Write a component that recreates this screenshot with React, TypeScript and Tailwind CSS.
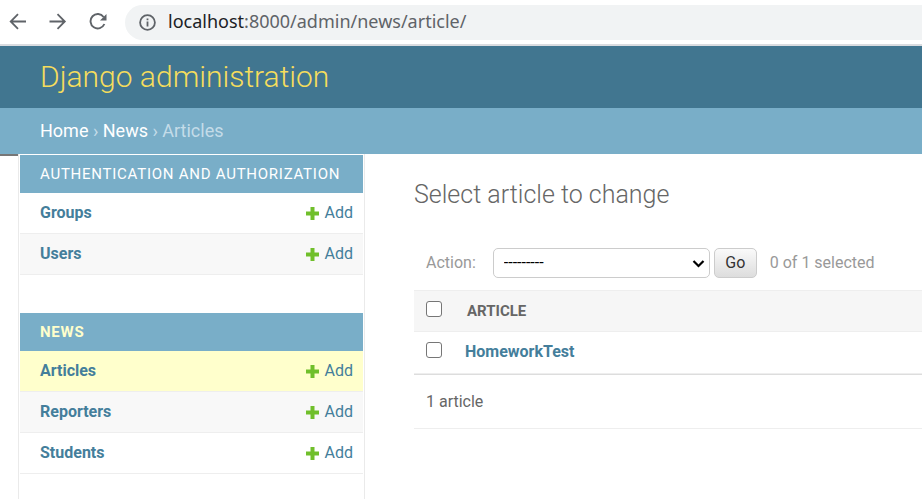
type Section = { title: string; current?: boolean; models: string[] };

const sections: Section[] = [
  { title: "Authentication and Authorization", models: ["Groups", "Users"] },
  { title: "News", current: true, models: ["Articles", "Reporters", "Students"] },
];

const rowTint = (model: string, index: number) =>
  model === "Articles" ? "bg-[#ffffcc]" : index % 2 === 1 ? "bg-[#f8f8f8]" : "bg-white";

function BrowserBar() {
  return (
    <div className="flex h-[46px] items-center border-b-2 border-[#dadce0] bg-white pl-2 font-['Noto_Sans','Open_Sans',sans-serif] text-[#5f6368]">
      <button type="button" aria-label="Back" className="flex w-5 justify-center">
        <svg width="18" height="18" viewBox="0 0 18 18" fill="none" stroke="currentColor" strokeWidth="1.8">
          <path d="M17 8.5H2M9 1.2 1.7 8.5 9 15.8" />
        </svg>
      </button>
      <button type="button" aria-label="Forward" className="ml-5 flex w-5 justify-center">
        <svg width="18" height="18" viewBox="0 0 18 18" fill="none" stroke="currentColor" strokeWidth="1.8">
          <path d="M.5 8.5H15M8.5 1.2l7.3 7.3-7.3 7.3" />
        </svg>
      </button>
      <button type="button" aria-label="Reload" className="ml-5 flex w-5 justify-center">
        <svg width="18" height="18" viewBox="0 0 18 18" fill="none" stroke="currentColor" strokeWidth="1.9">
          <path d="M14.6 4A7.2 7.2 0 1 0 15.4 11" />
          <path d="M17.5 1v6.5H11z" fill="currentColor" stroke="none" />
        </svg>
      </button>
      <div className="ml-[17px] flex h-[35px] flex-1 items-center rounded-l-full bg-[#f1f3f4] pl-3.5">
        <svg width="17" height="17" viewBox="0 0 17 17" fill="none" stroke="currentColor" strokeWidth="1.8">
          <circle cx="8.5" cy="8.5" r="7.4" />
          <path d="M8.5 7.6v4.9M8.5 4.4v1.8" />
        </svg>
        <span className="ml-3 pb-0.5 text-[18px] leading-6">
          <span className="text-[#202124]">localhost</span>:8000/admin/news/article/
        </span>
      </div>
    </div>
  );
}

function Sidebar() {
  return (
    <nav className="w-[347px] shrink-0 border-x border-[#eaeaea] px-px pt-px">
      {sections.map((section) => (
        <table key={section.title} className="mb-[38px] w-full border-separate border-spacing-0">
          <caption
            className={`h-[38px] bg-[#79aec8] px-5 text-left text-[15px] leading-[38px] tracking-wider uppercase ${
              section.current ? "font-bold text-[#ffffcc]" : "text-white"
            }`}
          >
            <a href="#">{section.title}</a>
          </caption>
          <tbody>
            {section.models.map((model, i) => (
              <tr key={model} className={`h-[41px] ${rowTint(model, i)}`}>
                <th
                  scope="row"
                  className="border-b border-[#eeeeee] p-0 pl-5 text-left font-bold text-[#447e9b]"
                >
                  <a href="#">{model}</a>
                </th>
                <td className="border-b border-[#eeeeee] p-0 pr-2.5 text-[#447e9b]">
                  <a href="#" className="flex items-center justify-end gap-1.5">
                    <svg width="13" height="13" viewBox="0 0 13 13" fill="#70bf2b">
                      <path d="M4.5 0h4v4.5H13v4H8.5V13h-4V8.5H0v-4h4.5z" />
                    </svg>
                    Add
                  </a>
                </td>
              </tr>
            ))}
          </tbody>
        </table>
      ))}
    </nav>
  );
}

function ChangeList() {
  return (
    <main className="min-w-0 flex-1 pt-[25px] pl-[49px]">
      <h1 className="text-[25px] leading-8 font-light text-[#666666]">Select article to change</h1>
      <div className="mt-[37px] flex h-[30px] items-center pl-3 text-[#999999]">
        <label htmlFor="action">Action:</label>
        <div className="relative ml-[17px]">
          <select
            id="action"
            className="block h-[30px] w-[217px] appearance-none rounded-[5px] border border-[#cccccc] bg-white pl-2.5 text-black"
          >
            <option>---------</option>
          </select>
          <svg
            className="pointer-events-none absolute top-3 right-[5px]"
            width="13"
            height="8"
            viewBox="0 0 13 8"
            fill="none"
            stroke="#000000"
            strokeWidth="2.2"
          >
            <path d="m1.5 1 5 5 5-5" />
          </svg>
        </div>
        <button
          type="button"
          className="ml-1 h-[30px] w-[43px] rounded-[5px] border border-[#cccccc] bg-linear-to-b from-[#fafafa] to-[#dddddd] text-[#333333]"
        >
          Go
        </button>
        <span className="ml-[13px]">0 of 1 selected</span>
      </div>
      <table className="mt-3 w-full border-separate border-spacing-0">
        <thead>
          <tr className="h-[42px] bg-[#f6f6f6]">
            <th className="w-[51px] border-y border-[#eeeeee] p-0 pb-1 pl-3 text-left">
              <input
                type="checkbox"
                aria-label="Select all"
                className="block size-4 appearance-none rounded-[3px] border border-[#767676] bg-white"
              />
            </th>
            <th className="border-y border-[#eeeeee] p-0 pl-0.5 text-left text-[15px] font-bold text-[#666666] uppercase">
              Article
            </th>
          </tr>
        </thead>
        <tbody>
          <tr className="h-[42px]">
            <td className="border-b border-[#eeeeee] p-0 pb-1.5 pl-3">
              <input
                type="checkbox"
                aria-label="HomeworkTest"
                className="block size-4 appearance-none rounded-[3px] border border-[#767676] bg-white"
              />
            </td>
            <th scope="row" className="border-b border-[#eeeeee] p-0 pb-0.5 text-left font-bold text-[#447e9b]">
              <a href="#">HomeworkTest</a>
            </th>
          </tr>
        </tbody>
      </table>
      <p className="h-[55px] border-t border-b border-t-[#dddddd] border-b-[#eeeeee] pl-3 leading-[53px] text-[#666666]">
        1 article
      </p>
    </main>
  );
}

export default function App() {
  return (
    <div className="flex min-h-screen flex-col bg-white font-[Roboto,'Liberation_Sans',sans-serif] text-[16px] leading-5">
      <BrowserBar />
      <header className="bg-[#417690] px-10">
        <div className="text-[30px] leading-[62px] font-light text-[#f5dd5d]">Django administration</div>
      </header>
      <div className="bg-[#79aec8] px-10 text-[18px] leading-[46px] text-[#c4dce8]">
        <a href="#" className="text-white">Home</a> ›{" "}
        <a href="#" className="text-white">News</a> › Articles
      </div>
      <div className="flex flex-1">
        <div className="w-[18px] shrink-0">
          <div className="h-0.5 bg-[#777777]" />
        </div>
        <Sidebar />
        <ChangeList />
      </div>
    </div>
  );
}
